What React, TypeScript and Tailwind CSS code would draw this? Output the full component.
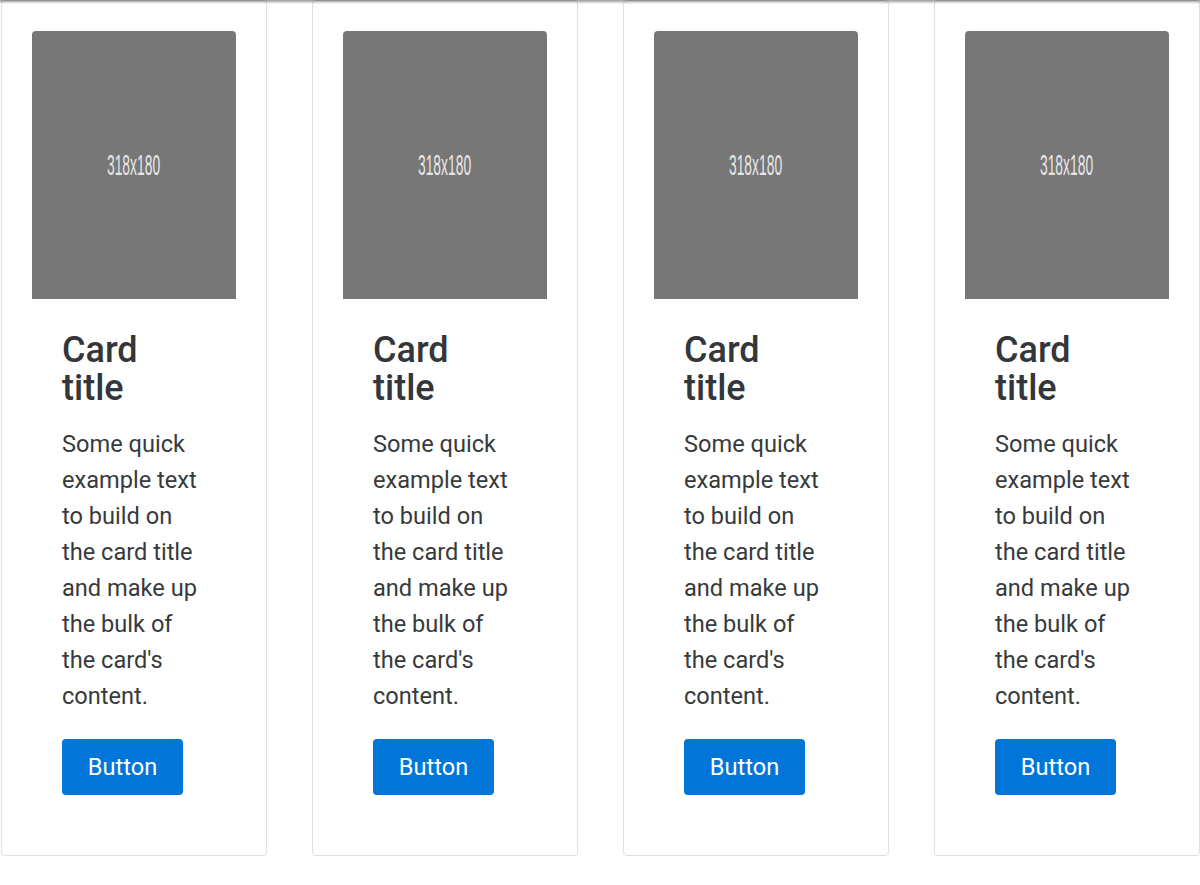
const cards = [0, 1, 2, 3];

function Card() {
  return (
    <div className="w-[266px] shrink-0 rounded-[4px] border border-[#dfdfdf] bg-white p-[30px]">
      <div className="flex h-[268px] items-center justify-center overflow-hidden rounded-t-[4px] bg-[#777777]">
        <span className="scale-x-[0.77] scale-y-[1.63] text-[18px] leading-none text-[#e6e6e6] [font-family:'Liberation_Sans',Arial,sans-serif]">
          318x180
        </span>
      </div>
      <div className="px-[30px] pt-[32px] pb-[30px]">
        <h4 className="text-[36px] leading-[38px] font-medium text-[#33363a]">Card title</h4>
        <p className="mt-[19px] text-[23.6px] leading-[36px] text-[#373a3c]">
          Some quick example text to build on the card title and make up the bulk of the card's content.
        </p>
        <button className="mt-[25px] h-[56px] w-[121px] rounded-[4px] bg-[#0275d8] pt-[2px] text-[23.6px] text-white">
          Button
        </button>
      </div>
    </div>
  );
}

export default function App() {
  return (
    <div className="relative h-[885px] w-[1200px] overflow-hidden bg-white [font-family:Roboto,'Noto_Sans',sans-serif]">
      <div className="flex items-start gap-[45px] pl-[1px]">
        {cards.map((i) => (
          <Card key={i} />
        ))}
      </div>
      <div className="absolute inset-x-0 top-0 h-[4px] bg-gradient-to-b from-[rgba(0,0,0,0.4)] to-transparent" />
    </div>
  );
}
